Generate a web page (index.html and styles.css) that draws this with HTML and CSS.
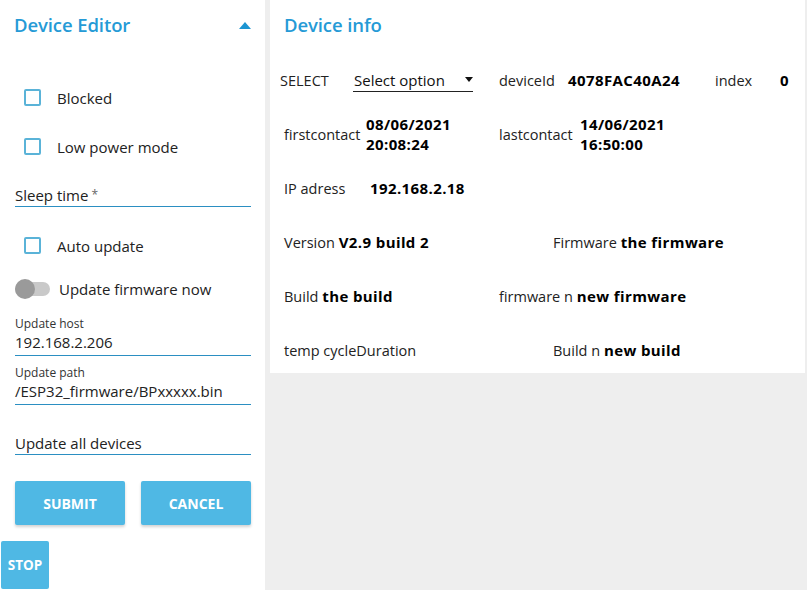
FILE: index.html
```html
<!DOCTYPE html>
<html>
<head>
<meta charset="utf-8">
<link rel="stylesheet" href="styles.css">
</head>
<body>
<div class="page">
  <aside class="editor">
    <div class="editor-form">
      <div class="panel-head">
        <h2 class="panel-title">Device Editor</h2>
        <span class="caret-up"></span>
      </div>
      <label class="check-row first"><span class="checkbox"></span><span>Blocked</span></label>
      <label class="check-row"><span class="checkbox"></span><span>Low power mode</span></label>
      <div class="field plain sleep"><span class="field-value">Sleep time<span class="req"> *</span></span></div>
      <label class="check-row auto"><span class="checkbox"></span><span>Auto update</span></label>
      <label class="toggle-row"><span class="switch"><span class="thumb"></span></span><span>Update firmware now</span></label>
      <div class="field labelled host">
        <span class="field-label">Update host</span>
        <span class="field-value">192.168.2.206</span>
      </div>
      <div class="field labelled path">
        <span class="field-label">Update path</span>
        <span class="field-value">/ESP32_firmware/BPxxxxx.bin</span>
      </div>
      <div class="field plain all"><span class="field-value">Update all devices</span></div>
      <div class="actions">
        <button class="btn btn-wide">SUBMIT</button>
        <button class="btn btn-wide">CANCEL</button>
      </div>
    </div>
    <button class="btn btn-stop">STOP</button>
  </aside>
  <main class="info">
    <div class="panel-head info-head">
      <h2 class="panel-title">Device info</h2>
    </div>
    <div class="info-rows">
      <div class="row">
        <span class="c-select">SELECT</span>
        <span class="select">Select option<span class="caret-down"></span></span>
        <span class="c-devid">deviceId</span>
        <b class="c-devval">4078FAC40A24</b>
        <span class="c-index">index</span>
        <b>0</b>
      </div>
      <div class="row">
        <span class="c-first">firstcontact</span>
        <b class="c-firstval two">08/06/2021<br>20:08:24</b>
        <span class="c-last">lastcontact</span>
        <b class="two">14/06/2021<br>16:50:00</b>
      </div>
      <div class="row">
        <span class="c-ip">IP adress</span>
        <b>192.168.2.18</b>
      </div>
      <div class="row">
        <span class="c-half">Version <b>V2.9 build 2</b></span>
        <span>Firmware <b>the firmware</b></span>
      </div>
      <div class="row">
        <span class="c-third">Build <b>the build</b></span>
        <span>firmware n <b>new firmware</b></span>
      </div>
      <div class="row">
        <span class="c-half">temp cycleDuration</span>
        <span>Build n <b>new build</b></span>
      </div>
    </div>
  </main>
</div>
</body>
</html>
```

FILE: styles.css
```css
* { box-sizing: border-box; }
html, body { margin: 0; padding: 0; }
body {
  background: #eeeeee;
  font-family: "Open Sans", "Noto Sans", sans-serif;
  font-size: 14px;
  color: #222;
  width: 807px;
  height: 590px;
  overflow: hidden;
}
.page {
  display: flex;
  align-items: flex-start;
  height: 590px;
}
.editor {
  width: 265px;
  height: 590px;
  background: #fff;
  display: flex;
  flex-direction: column;
}
.editor-form {
  padding: 0 14px 0 15px;
  display: flex;
  flex-direction: column;
}
.panel-head {
  height: 50px;
  display: flex;
  align-items: center;
  justify-content: space-between;
}
.panel-title {
  margin: 0 0 1px 0;
  font-size: 18.5px;
  font-weight: 600;
  color: #259ad6;
  letter-spacing: -0.1px;
}
.editor .panel-title { margin-left: -1px; }
.caret-up {
  width: 0; height: 0;
  border-left: 6px solid transparent;
  border-right: 6px solid transparent;
  border-bottom: 7px solid #1d95d2;
  margin-top: 1px;
}
.check-row {
  height: 49px;
  display: flex;
  align-items: center;
  gap: 16px;
  padding-left: 9px;
  font-size: 15px;
}
.check-row.first { margin-top: 23px; }
.check-row.auto { margin-top: 14px; }
.checkbox {
  width: 17px; height: 17px;
  border: 2px solid #5ab3d8;
  border-radius: 2px;
  flex: none;
}
.toggle-row {
  height: 38px;
  display: flex;
  align-items: center;
  gap: 9px;
  font-size: 15px;
}
.switch {
  position: relative;
  width: 35px; height: 14px;
  border-radius: 7px;
  background: #c9c9c9;
  flex: none;
}
.thumb {
  position: absolute;
  left: 0; top: -3px;
  width: 20px; height: 20px;
  border-radius: 50%;
  background: #9a9a9a;
}
.field {
  display: flex;
  flex-direction: column;
  border-bottom: 1px solid #2b8fc2;
  padding-bottom: 1px;
}
.field-label { font-size: 12px; line-height: 16px; color: #333; }
.field-value { font-size: 15px; line-height: 20px; color: #222; }
.req { color: #666; font-size: 12px; vertical-align: top; }
.field.plain { padding-top: 15px; }
.field.sleep { padding-top: 14px; }
.field.host { margin-top: 8px; padding-bottom: 3px; }
.field.path { margin-top: 9px; padding-bottom: 2px; }
.field.path .field-value { line-height: 21px; }
.field.all { padding-top: 16px; margin-top: 12px; }
.actions {
  display: flex;
  gap: 16px;
  margin-top: 26px;
}
.btn {
  border: none;
  background: #4fb8e4;
  color: #fff;
  font-family: "Open Sans", "Noto Sans", sans-serif;
  font-weight: 700;
  font-size: 14px;
  border-radius: 2px;
  padding: 0;
  cursor: pointer;
}
.btn-wide {
  width: 110px;
  height: 44px;
  box-shadow: 0 2px 3px rgba(0,0,0,0.18);
}
.btn-stop {
  width: 48px;
  height: 48px;
  margin: 16px 0 0 1px;
  font-size: 13.5px;
}
.info {
  width: 535px;
  margin-left: 5px;
  background: #fff;
  padding: 0 0 3px 14px;
}
.info-rows {
  display: flex;
  flex-direction: column;
  gap: 14px;
  margin-top: 10px;
}
.row {
  height: 40px;
  display: flex;
  align-items: center;
  font-size: 14.5px;
  white-space: nowrap;
}
.row b { color: #000; font-weight: 700; font-size: 15px; letter-spacing: 0.4px; }
.two { line-height: 20px; }
.c-select { width: 73px; margin-left: -4px; }
.select {
  width: 120px;
  margin-right: 26px;
  border-bottom: 1px solid #222;
  padding: 0 0 1px 1px;
  line-height: 20px;
  margin-top: 1px;
  display: flex;
  align-items: center;
  justify-content: space-between;
  color: #111;
  font-size: 15px;
}
.caret-down {
  width: 0; height: 0;
  border-left: 4.5px solid transparent;
  border-right: 4.5px solid transparent;
  border-top: 5px solid #111;
}
.c-devid { width: 69px; }
.c-devval { width: 147px; }
.c-index { width: 65px; }
.c-first { width: 82px; }
.c-firstval { width: 133px; }
.c-last { width: 81px; }
.c-ip { width: 86px; }
.c-half { width: 269px; }
.c-third { width: 215px; }
```
